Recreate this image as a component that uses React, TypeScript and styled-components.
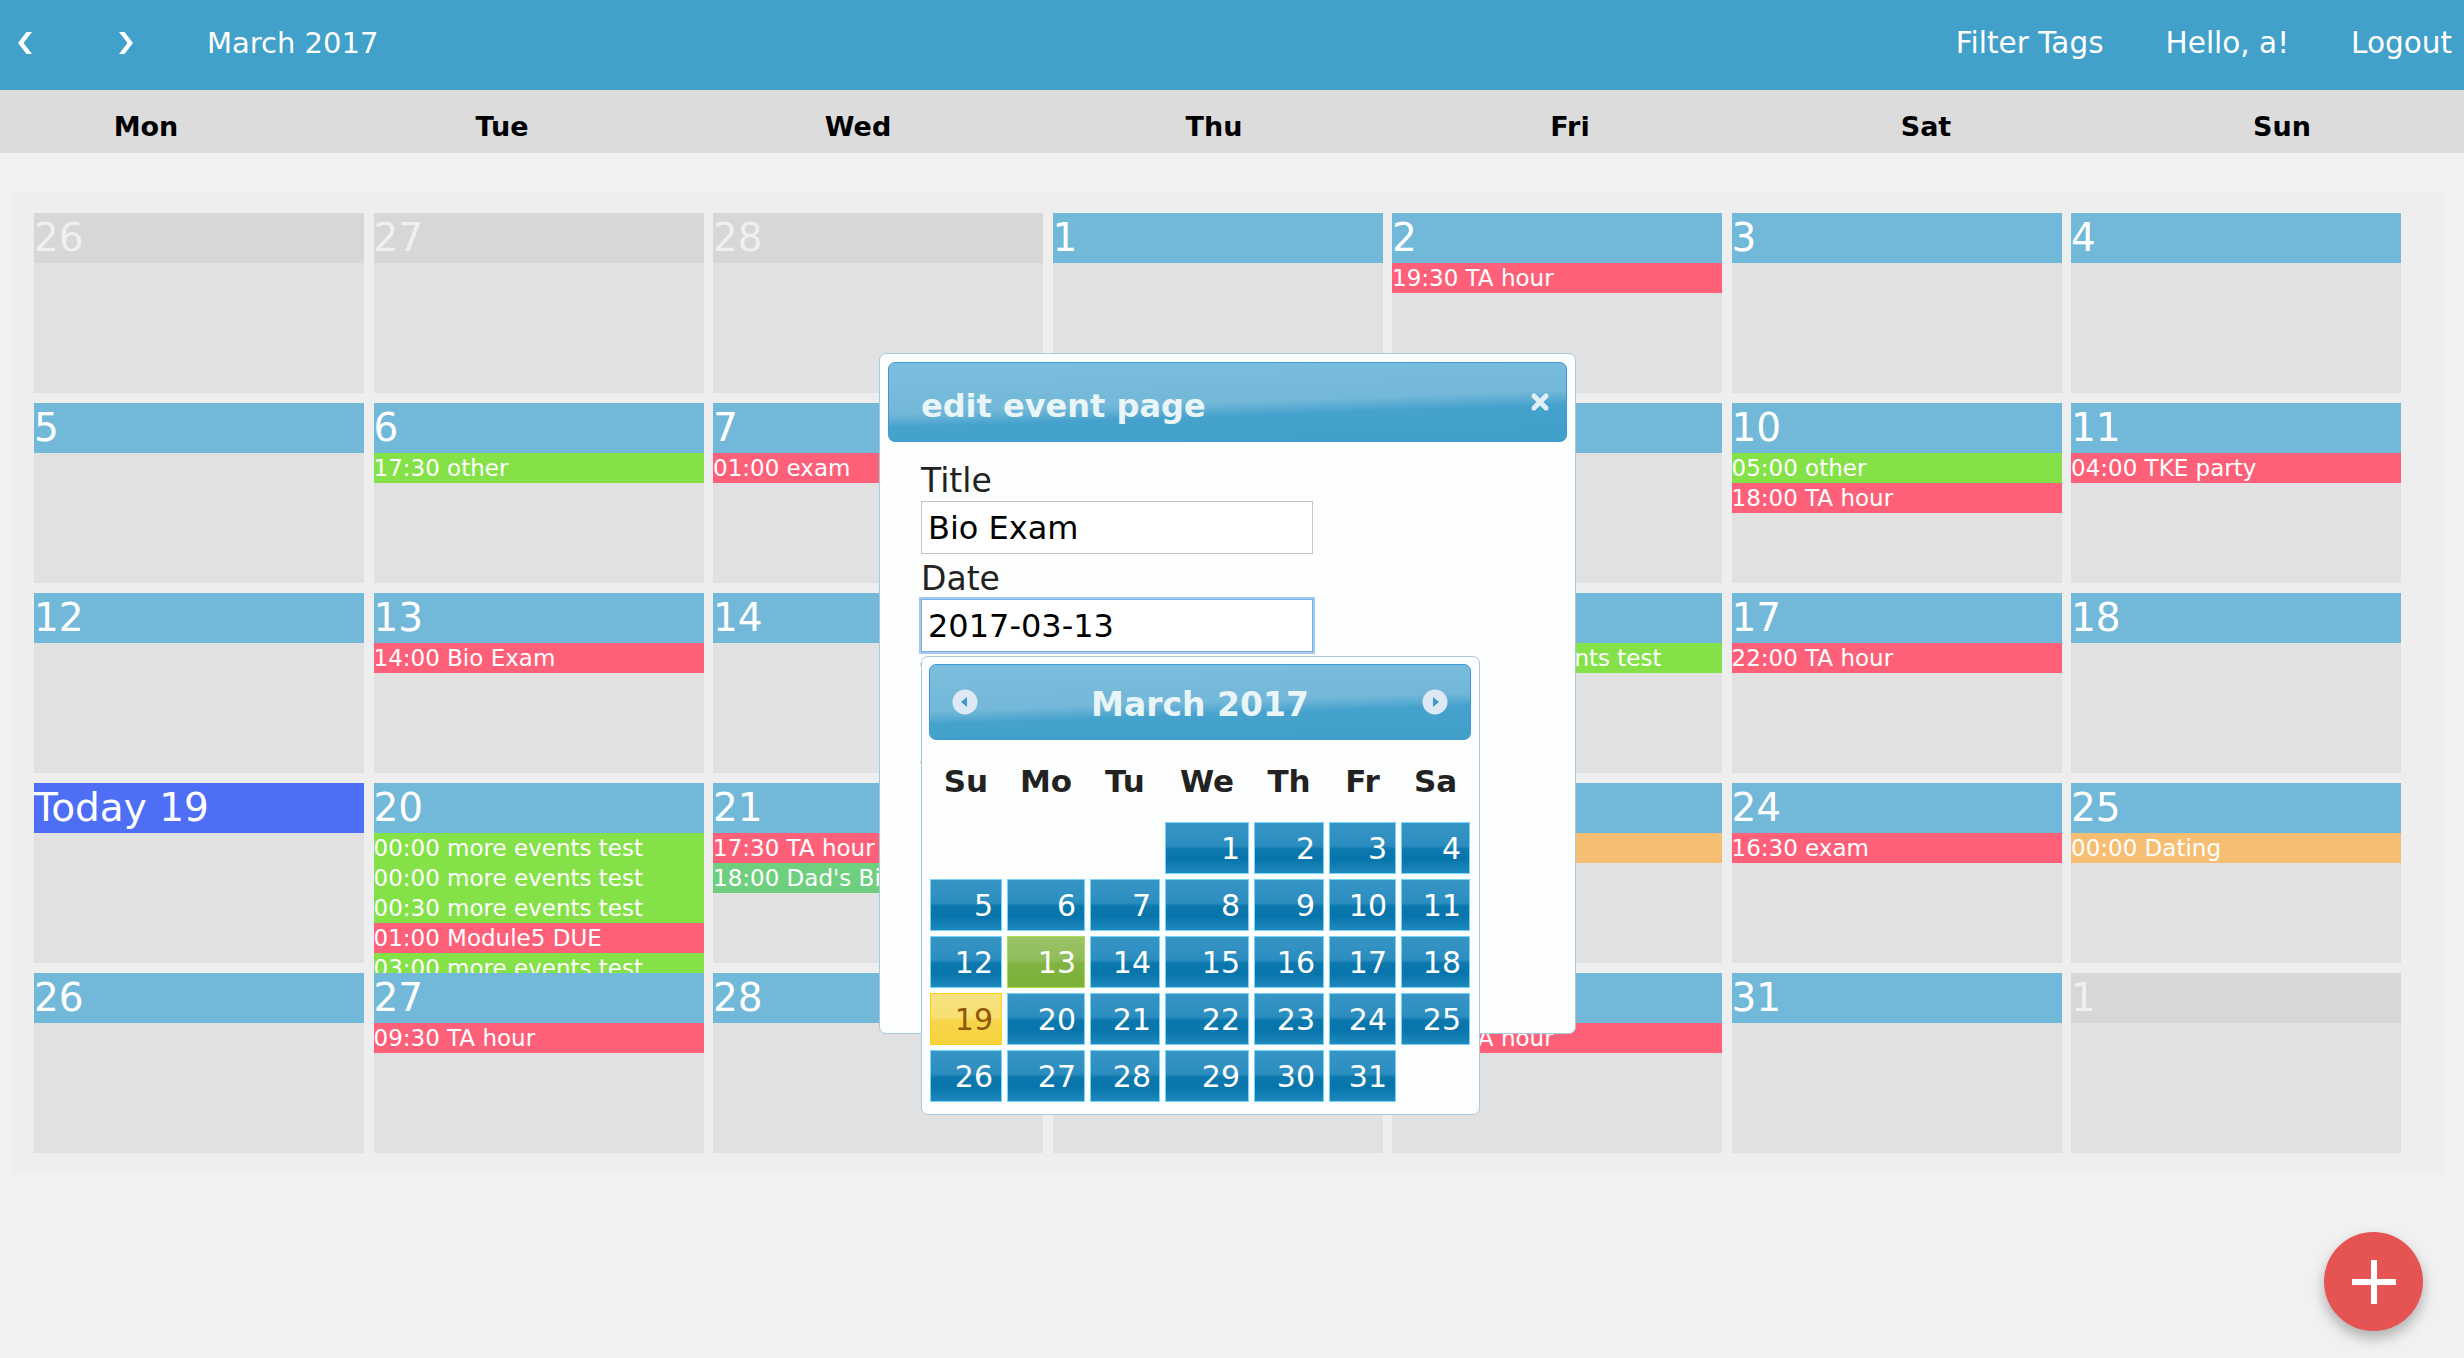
import React from "react";
import styled, { createGlobalStyle, css } from "styled-components";

const GlobalStyle = createGlobalStyle`
  html, body { margin: 0; padding: 0; }
  body {
    background: #f1f1f1;
    font-family: "DejaVu Sans", "Liberation Sans", sans-serif;
    min-height: 100vh;
    overflow: hidden;
  }
`;

type Tone = "red" | "green" | "orange" | "mint";
type Ev = { t: string; c: Tone };
type Day = { n: number; kind?: "other" | "today"; events?: Ev[] };

const toneColor: Record<Tone, string> = {
  red: "#fe5f79",
  green: "#84e248",
  orange: "#f5be72",
  mint: "#6ed07e",
};

const weeks: Day[][] = [
  [
    { n: 26, kind: "other" },
    { n: 27, kind: "other" },
    { n: 28, kind: "other" },
    { n: 1 },
    { n: 2, events: [{ t: "19:30 TA hour", c: "red" }] },
    { n: 3 },
    { n: 4 },
  ],
  [
    { n: 5 },
    { n: 6, events: [{ t: "17:30 other", c: "green" }] },
    { n: 7, events: [{ t: "01:00 exam", c: "red" }] },
    { n: 8 },
    { n: 9 },
    {
      n: 10,
      events: [
        { t: "05:00 other", c: "green" },
        { t: "18:00 TA hour", c: "red" },
      ],
    },
    { n: 11, events: [{ t: "04:00 TKE party", c: "red" }] },
  ],
  [
    { n: 12 },
    { n: 13, events: [{ t: "14:00 Bio Exam", c: "red" }] },
    { n: 14 },
    { n: 15 },
    { n: 16, events: [{ t: "00:00 more events test", c: "green" }] },
    { n: 17, events: [{ t: "22:00 TA hour", c: "red" }] },
    { n: 18 },
  ],
  [
    { n: 19, kind: "today" },
    {
      n: 20,
      events: [
        { t: "00:00 more events test", c: "green" },
        { t: "00:00 more events test", c: "green" },
        { t: "00:30 more events test", c: "green" },
        { t: "01:00 Module5 DUE", c: "red" },
        { t: "03:00 more events test", c: "green" },
        { t: "04:00 more events test", c: "green" },
      ],
    },
    {
      n: 21,
      events: [
        { t: "17:30 TA hour", c: "red" },
        { t: "18:00 Dad's Birthday", c: "mint" },
      ],
    },
    { n: 22 },
    { n: 23, events: [{ t: "12:00 Dating", c: "orange" }] },
    { n: 24, events: [{ t: "16:30 exam", c: "red" }] },
    { n: 25, events: [{ t: "00:00 Dating", c: "orange" }] },
  ],
  [
    { n: 26 },
    { n: 27, events: [{ t: "09:30 TA hour", c: "red" }] },
    { n: 28 },
    { n: 29 },
    { n: 30, events: [{ t: "18:00 TA hour", c: "red" }] },
    { n: 31 },
    { n: 1, kind: "other" },
  ],
];

/* ---------- page ---------- */

const Page = styled.div`
  position: relative;
  width: 2464px;
  min-height: 1358px;
`;

const TopBar = styled.header`
  height: 90px;
  background: #41a1ca;
  display: flex;
  align-items: center;
  padding: 0 12px 4px 18px;
  box-sizing: border-box;
  color: #ffffff;
`;

const NavButton = styled.button<{ $w: number }>`
  width: ${(p) => p.$w}px;
  height: 40px;
  padding: 0;
  border: 0;
  background: none;
  display: flex;
  align-items: center;
  cursor: pointer;
`;

const MonthTitle = styled.div`
  font-size: 29px;
  margin-left: 1px;
`;

const Spacer = styled.div`
  flex: 1;
`;

const NavLinks = styled.nav`
  display: flex;
  gap: 62px;
`;

const NavLink = styled.span`
  font-size: 29.5px;
  cursor: pointer;
`;

const DayBar = styled.div`
  height: 63px;
  background: #dcdcdc;
  overflow: hidden;
`;

const DayBarGrid = styled.div`
  display: grid;
  grid-template-columns: repeat(7, 356px);
  margin-left: -32px;
  height: 100%;
  align-items: center;
  padding-top: 9px;
  box-sizing: border-box;
`;

const DayName = styled.div`
  text-align: center;
  font-weight: bold;
  font-size: 27px;
  color: #000;
`;

const Board = styled.main`
  margin: 40px 20px 0 12px;
  background: #eeeeee;
  padding: 20px 22px;
`;

const MonthGrid = styled.div`
  display: grid;
  grid-template-columns: repeat(7, 330px);
  grid-auto-rows: 180px;
  column-gap: 9.5px;
  row-gap: 10px;
`;

const Cell = styled.div`
  position: relative;
  background: #e1e1e1;
`;

const CellHead = styled.div<{ $kind?: "other" | "today" }>`
  height: 50px;
  line-height: 50px;
  font-size: 39px;
  color: #ffffff;
  background: #72b8d8;
  white-space: nowrap;
  ${(p) =>
    p.$kind === "other" &&
    css`
      background: #d7d7d7;
      color: #f0f0f0;
    `}
  ${(p) =>
    p.$kind === "today" &&
    css`
      background: #4e6ff5;
    `}
`;

const EventBar = styled.div<{ $tone: Tone }>`
  height: 30px;
  line-height: 30px;
  font-size: 23px;
  color: #ffffff;
  white-space: nowrap;
  background: ${(p) => toneColor[p.$tone]};
`;

/* ---------- dialog ---------- */

const glass = css`
  border: 1px solid #4297d7;
  border-radius: 7px;
  background: linear-gradient(
    178deg,
    #7cbedd 0%,
    #73b8d9 50%,
    #5dadd3 57%,
    #45a2cc 64%,
    #40a0ca 100%
  );
  color: #eaf5f7;
  box-sizing: border-box;
`;

const Dialog = styled.section`
  position: absolute;
  left: 879px;
  top: 353px;
  width: 697px;
  height: 681px;
  box-sizing: border-box;
  border: 1px solid #a6c9e2;
  border-radius: 7px;
  background: #fcfdfd;
  padding: 8px;
  z-index: 5;
`;

const DialogBar = styled.div`
  ${glass};
  height: 80px;
  display: flex;
  align-items: center;
  justify-content: space-between;
  padding: 0 16px 0 32px;
`;

const DialogTitle = styled.h2`
  margin: 0;
  padding-top: 7px;
  font-size: 32px;
  font-weight: bold;
`;

const CloseButton = styled.button`
  border: 0;
  background: none;
  padding: 0;
  width: 20px;
  height: 20px;
  display: flex;
  cursor: pointer;
`;

const DialogBody = styled.div`
  padding: 20px 0 0 33px;
`;

const FieldLabel = styled.label`
  display: block;
  font-size: 33px;
  line-height: 38px;
  color: #222222;
`;

const TextInput = styled.input<{ $focused?: boolean }>`
  display: block;
  width: 392px;
  height: 53px;
  box-sizing: border-box;
  margin: 1px 0 6px;
  padding: 0 6px;
  border: 1px solid #c4c4c4;
  background: #ffffff;
  font-family: "DejaVu Sans", "Liberation Sans", sans-serif;
  font-size: 32px;
  color: #000000;
  outline: none;
  ${(p) =>
    p.$focused &&
    css`
      border-color: #79aee9;
      box-shadow: 0 0 0 2px #a3c7ef;
    `}
`;

/* ---------- datepicker ---------- */

const Picker = styled.div`
  position: absolute;
  left: 921px;
  top: 656px;
  width: 559px;
  height: 459px;
  box-sizing: border-box;
  border: 1px solid #a6c9e2;
  border-radius: 7px;
  background: #fcfdfd;
  padding: 7px 8px 12px 7px;
  z-index: 6;
`;

const PickerHead = styled.div`
  ${glass};
  height: 76px;
  display: flex;
  align-items: center;
  justify-content: space-between;
  padding: 0 22px;
`;

const PickerTitle = styled.div`
  font-size: 33px;
  font-weight: bold;
  padding-top: 4px;
`;

const CircleBtn = styled.button`
  border: 0;
  padding: 0;
  background: none;
  width: 26px;
  height: 26px;
  display: flex;
  cursor: pointer;
`;

const pickerCols = "72px 78px 70px 84px 70px 67px 69px";

const WeekHead = styled.div`
  display: grid;
  grid-template-columns: ${pickerCols};
  column-gap: 5px;
  height: 82px;
  align-items: center;
  margin-left: 1px;
`;

const WeekDay = styled.div`
  text-align: center;
  font-weight: bold;
  font-size: 31px;
  color: #222222;
`;

const DaysGrid = styled.div`
  display: grid;
  grid-template-columns: ${pickerCols};
  grid-auto-rows: 52px;
  gap: 5px;
  margin-left: 1px;
`;

type DayState = "default" | "active" | "today";

const DayCell = styled.a<{ $state: DayState }>`
  display: flex;
  align-items: center;
  justify-content: flex-end;
  padding-right: 8px;
  box-sizing: border-box;
  font-size: 30px;
  color: #ffffff;
  text-decoration: none;
  border: 1px solid #77d5f7;
  background: linear-gradient(
    180deg,
    #3795c5 0%,
    #2b8dbf 46%,
    #0c78ad 52%,
    #0675ab 72%,
    #2088bd 100%
  );
  ${(p) =>
    p.$state === "active" &&
    css`
      border-color: #acdd4a;
      background: linear-gradient(
        180deg,
        #9ac468 0%,
        #90bd5a 46%,
        #80b33f 54%,
        #7cb13b 100%
      );
    `}
  ${(p) =>
    p.$state === "today" &&
    css`
      border-color: #fcd113;
      color: #915608;
      background: linear-gradient(
        180deg,
        #f8e384 0%,
        #f7df72 46%,
        #f6d54a 54%,
        #f5d33f 100%
      );
    `}
`;

const Blank = styled.span``;

/* ---------- FAB ---------- */

const Fab = styled.button`
  position: fixed;
  right: 41px;
  bottom: 27px;
  width: 99px;
  height: 99px;
  border-radius: 50%;
  border: 0;
  padding: 0;
  background: #e65353;
  box-shadow: 0 7px 14px rgba(0, 0, 0, 0.28);
  display: flex;
  align-items: center;
  justify-content: center;
  cursor: pointer;
`;

/* ---------- icons ---------- */

const Chevron = ({ dir }: { dir: "left" | "right" }) => (
  <svg width="14" height="22" viewBox="0 0 14 22">
    <polygon
      points={
        dir === "left"
          ? "14,0 8.5,0 0,11 8.5,22 14,22 5.5,11"
          : "0,0 5.5,0 14,11 5.5,22 0,22 8.5,11"
      }
      fill="#ffffff"
    />
  </svg>
);

const CircleArrow = ({ dir }: { dir: "left" | "right" }) => (
  <svg width="26" height="26" viewBox="0 0 26 26">
    <circle cx="13" cy="13" r="12.5" fill="#dde9f4" />
    <polygon
      points={dir === "left" ? "15,8 9,13 15,18" : "11,8 17,13 11,18"}
      fill="#3d9bcb"
    />
  </svg>
);

const CloseIcon = () => (
  <svg width="20" height="20" viewBox="0 0 20 20">
    <path
      d="M4 4 L16 16 M16 4 L4 16"
      stroke="#e2eef5"
      strokeWidth="5"
      strokeLinecap="round"
    />
  </svg>
);

const PlusIcon = () => (
  <svg width="44" height="44" viewBox="0 0 44 44">
    <rect x="19" y="0" width="6" height="44" fill="#ffffff" />
    <rect x="0" y="19" width="44" height="6" fill="#ffffff" />
  </svg>
);

/* ---------- app ---------- */

const dayNames = ["Mon", "Tue", "Wed", "Thu", "Fri", "Sat", "Sun"];
const pickerDays = ["Su", "Mo", "Tu", "We", "Th", "Fr", "Sa"];

export default function App() {
  const pickerCells: (number | null)[] = [null, null, null];
  for (let d = 1; d <= 31; d++) pickerCells.push(d);

  return (
    <Page>
      <GlobalStyle />
      <TopBar>
        <NavButton $w={101} aria-label="Previous month">
          <Chevron dir="left" />
        </NavButton>
        <NavButton $w={87} aria-label="Next month">
          <Chevron dir="right" />
        </NavButton>
        <MonthTitle>March 2017</MonthTitle>
        <Spacer />
        <NavLinks>
          <NavLink>Filter Tags</NavLink>
          <NavLink>Hello, a!</NavLink>
          <NavLink>Logout</NavLink>
        </NavLinks>
      </TopBar>

      <DayBar>
        <DayBarGrid>
          {dayNames.map((d) => (
            <DayName key={d}>{d}</DayName>
          ))}
        </DayBarGrid>
      </DayBar>

      <Board>
        <MonthGrid>
          {weeks.flat().map((day, i) => (
            <Cell key={i}>
              <CellHead $kind={day.kind}>
                {day.kind === "today" ? `Today ${day.n}` : day.n}
              </CellHead>
              {(day.events || []).map((ev, j) => (
                <EventBar key={j} $tone={ev.c}>
                  {ev.t}
                </EventBar>
              ))}
            </Cell>
          ))}
        </MonthGrid>
      </Board>

      <Dialog role="dialog" aria-label="edit event page">
        <DialogBar>
          <DialogTitle>edit event page</DialogTitle>
          <CloseButton aria-label="close">
            <CloseIcon />
          </CloseButton>
        </DialogBar>
        <DialogBody>
          <FieldLabel>Title</FieldLabel>
          <TextInput defaultValue="Bio Exam" readOnly />
          <FieldLabel>Date</FieldLabel>
          <TextInput $focused defaultValue="2017-03-13" readOnly />
          <FieldLabel>Time</FieldLabel>
          <TextInput defaultValue="14:00" readOnly />
          <FieldLabel>Tag</FieldLabel>
          <TextInput defaultValue="exam" readOnly />
        </DialogBody>
      </Dialog>

      <Picker>
        <PickerHead>
          <CircleBtn aria-label="Prev">
            <CircleArrow dir="left" />
          </CircleBtn>
          <PickerTitle>March 2017</PickerTitle>
          <CircleBtn aria-label="Next">
            <CircleArrow dir="right" />
          </CircleBtn>
        </PickerHead>
        <WeekHead>
          {pickerDays.map((d) => (
            <WeekDay key={d}>{d}</WeekDay>
          ))}
        </WeekHead>
        <DaysGrid>
          {pickerCells.map((d, i) =>
            d === null ? (
              <Blank key={i} />
            ) : (
              <DayCell
                key={i}
                $state={d === 13 ? "active" : d === 19 ? "today" : "default"}
              >
                {d}
              </DayCell>
            )
          )}
        </DaysGrid>
      </Picker>

      <Fab aria-label="Add event">
        <PlusIcon />
      </Fab>
    </Page>
  );
}
